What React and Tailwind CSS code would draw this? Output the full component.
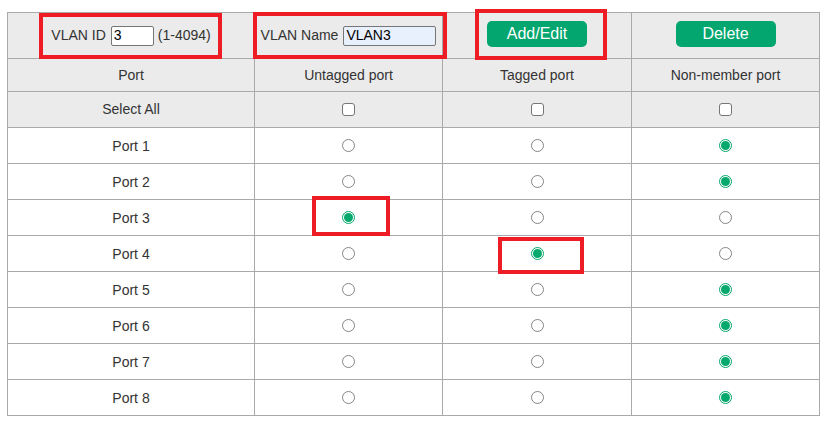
import React from "react";

const ports = [
  { name: "Port 1", sel: 2 },
  { name: "Port 2", sel: 2 },
  { name: "Port 3", sel: 0 },
  { name: "Port 4", sel: 1 },
  { name: "Port 5", sel: 2 },
  { name: "Port 6", sel: 2 },
  { name: "Port 7", sel: 2 },
  { name: "Port 8", sel: 2 },
];

const widths = ["w-[247px]", "w-[188px]", "w-[189px]", "w-[188px]"];

const Cell = ({ i, className = "", children }) => (
  <div
    className={`${widths[i]} shrink-0 border-r border-b border-[#aaaaaa] flex items-center justify-center ${className}`}
  >
    {children}
  </div>
);

const Radio = ({ checked }) =>
  checked ? (
    <span className="w-[13px] h-[13px] rounded-full border border-[#05a86d] flex items-center justify-center bg-white">
      <span className="w-[9px] h-[9px] rounded-full bg-[#05a86d]" />
    </span>
  ) : (
    <span className="w-[13px] h-[13px] rounded-full border border-[#858585] bg-white" />
  );

const Checkbox = () => (
  <span className="w-[13px] h-[13px] rounded-[3px] border border-[#767676] bg-white" />
);

const Mark = ({ className }) => (
  <div className={`absolute border-4 border-[#ee1c25] ${className}`} />
);

export default function App() {
  return (
    <div
      className="relative w-[834px] h-[422px] bg-white text-[14px] text-[#333333]"
      style={{ fontFamily: '"Liberation Sans", Arial, sans-serif' }}
    >
      <div className="absolute left-[7px] top-[12px] border-l border-t border-[#aaaaaa]">
        {/* top form row */}
        <div className="flex h-[46px] bg-[#ebebeb]">
          <Cell i={0}>
            <span>VLAN ID</span>
            <input
              readOnly
              value="3"
              className="ml-[5px] w-[43px] h-[20px] border border-[#767676] rounded-[2px] bg-white px-[2px] text-[14px] text-black outline-none"
            />
            <span className="ml-[4px]">(1-4094)</span>
          </Cell>
          <Cell i={1}>
            <span>VLAN Name</span>
            <input
              readOnly
              value="VLAN3"
              className="ml-[5px] w-[93px] h-[20px] border border-[#767676] rounded-[2px] bg-[#e8f0fe] px-[2px] text-[14px] text-black outline-none"
            />
          </Cell>
          <Cell i={2}>
            <button className="-mt-[3px] w-[100px] h-[26px] rounded-[5px] bg-[#02a66e] text-white text-[16px]">
              Add/Edit
            </button>
          </Cell>
          <Cell i={3}>
            <button className="-mt-[3px] w-[100px] h-[26px] rounded-[5px] bg-[#02a66e] text-white text-[16px]">
              Delete
            </button>
          </Cell>
        </div>

        {/* column headings */}
        <div className="flex h-[33px] bg-[#ebebeb]">
          <Cell i={0}>Port</Cell>
          <Cell i={1}>Untagged port</Cell>
          <Cell i={2}>Tagged port</Cell>
          <Cell i={3}>Non-member port</Cell>
        </div>

        <div className="flex h-[36px] bg-[#ebebeb]">
          <Cell i={0}>Select All</Cell>
          <Cell i={1}><Checkbox /></Cell>
          <Cell i={2}><Checkbox /></Cell>
          <Cell i={3}><Checkbox /></Cell>
        </div>

        {ports.map((p) => (
          <div key={p.name} className="flex h-[36px] bg-white">
            <Cell i={0} className="pt-[2px]">{p.name}</Cell>
            <Cell i={1}><Radio checked={p.sel === 0} /></Cell>
            <Cell i={2}><Radio checked={p.sel === 1} /></Cell>
            <Cell i={3}><Radio checked={p.sel === 2} /></Cell>
          </div>
        ))}
      </div>

      {/* annotation boxes */}
      <Mark className="left-[39px] top-[13px] w-[183px] h-[46px]" />
      <Mark className="left-[253px] top-[12px] w-[194px] h-[47px]" />
      <Mark className="left-[475px] top-[9px] w-[132px] h-[51px]" />
      <Mark className="left-[312px] top-[196px] w-[78px] h-[40px]" />
      <Mark className="left-[498px] top-[237px] w-[86px] h-[37px]" />
    </div>
  );
}
